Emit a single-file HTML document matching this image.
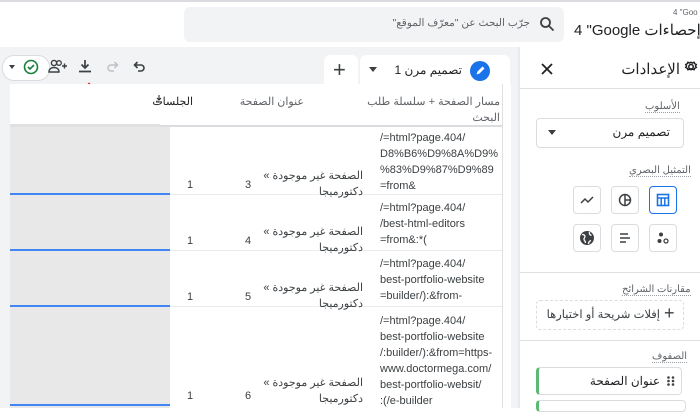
<!DOCTYPE html>
<html><head><meta charset="utf-8"><style>
body{margin:0;width:700px;height:408px;overflow:hidden;background:#fff;font-family:"Liberation Sans","Noto Sans CJK SC",sans-serif;position:relative;color:#202124}
.a{position:absolute}
.r{direction:rtl}
.cell{position:absolute;font-size:11px;line-height:16px;color:#3c4043;white-space:nowrap}
.btn{position:absolute;width:28px;height:28px;border:1px solid #dadce0;border-radius:4px;background:#fff;box-sizing:border-box}
.lbl{position:absolute;font-size:10px;color:#5f6368;border-bottom:1px dotted #9aa0a6;direction:rtl;white-space:nowrap}
</style></head><body>
<div class="a" style="left:0;top:0;width:700px;height:2px;background:#dadce0"></div>
<div class="a" style="left:184px;top:7px;width:380px;height:35px;background:#f1f3f4;border-radius:6px"></div>
<svg class="a" style="left:539px;top:16px" width="16" height="16" viewBox="0 0 16 16"><circle cx="6.5" cy="6.5" r="4.5" fill="none" stroke="#3c4043" stroke-width="1.8"/><path d="M10 10l4.5 4.5" stroke="#3c4043" stroke-width="1.8"/></svg>
<div class="a r" style="left:380px;top:17px;width:150px;font-size:10.5px;color:#5f6368;text-align:right;white-space:nowrap">جرّب البحث عن "معرّف الموقع"</div>
<div class="a" style="left:673px;top:8px;width:27px;overflow:hidden;font-size:8px;color:#5f6368;white-space:nowrap">4 "Goo</div>
<div class="a" style="left:574px;top:21px;font-size:15px;color:#202124;white-space:nowrap">4 "Google <span dir="rtl">إحصاءات</span></div>
<div class="a" style="left:0;top:47px;width:520px;height:361px;background:#f1f3f4"></div>
<div class="a" style="left:518px;top:47px;width:2px;height:361px;background:#e8eaed"></div>
<!-- right panel -->
<div class="a" style="left:520px;top:88px;width:180px;height:1px;background:#e0e0e0"></div>
<svg class="a" style="left:682px;top:60px" width="18" height="18" viewBox="0 0 24 24"><path d="M12 3l2 1 2-1 1 2 2 1-1 2 1 2-2 1-1 2-2-1-2 1-2-1-2 1-1-2-2-1 1-2-1-2 2-1 1-2 2 1z" fill="none" stroke="#202124" stroke-width="2"/><circle cx="12" cy="9" r="3" fill="none" stroke="#202124" stroke-width="2"/></svg>
<div class="a r" style="left:580px;top:60px;width:100px;font-size:15px;text-align:right">الإعدادات</div>
<svg class="a" style="left:540px;top:62px" width="14" height="14" viewBox="0 0 14 14"><path d="M2 2l10 10M12 2L2 12" stroke="#202124" stroke-width="1.8"/></svg>
<div class="lbl" style="left:645px;top:101px">الأسلوب</div>
<div class="a" style="left:536px;top:118px;width:146px;height:28px;border:1px solid #dadce0;border-radius:4px"></div>
<div class="a r" style="left:590px;top:125px;width:80px;font-size:12px;text-align:right">تصميم مرن</div>
<div class="a" style="left:548px;top:130px;width:0;height:0;border-left:4px solid transparent;border-right:4px solid transparent;border-top:5px solid #3c4043"></div>
<div class="lbl" style="left:629px;top:165px">التمثيل البصري</div>
<div class="btn" style="left:649px;top:186px;border-color:#1a73e8"></div>
<svg class="a" style="left:656px;top:193px" width="14" height="14" viewBox="0 0 14 14"><rect x="1.5" y="1.5" width="11" height="11" fill="none" stroke="#1a73e8" stroke-width="1.6"/><path d="M1.5 5h11M5.2 5v7.5M8.8 5v7.5" stroke="#1a73e8" stroke-width="1.5"/></svg>
<div class="btn" style="left:611px;top:186px"></div>
<svg class="a" style="left:618px;top:193px" width="14" height="14" viewBox="0 0 14 14"><circle cx="7" cy="7" r="5.5" fill="none" stroke="#3c4043" stroke-width="1.5"/><path d="M7 1.5v11M7 7h5.5" stroke="#3c4043" stroke-width="1.5"/></svg>
<div class="btn" style="left:573px;top:186px"></div>
<svg class="a" style="left:580px;top:193px" width="14" height="14" viewBox="0 0 14 14"><path d="M1 10l4-4 3 3 5-5" fill="none" stroke="#3c4043" stroke-width="1.5"/></svg>
<div class="btn" style="left:649px;top:224px"></div>
<svg class="a" style="left:656px;top:231px" width="14" height="14" viewBox="0 0 14 14"><circle cx="5" cy="3.5" r="2" fill="#3c4043"/><circle cx="3.5" cy="10" r="2" fill="#3c4043"/><circle cx="10" cy="10" r="2" fill="none" stroke="#3c4043" stroke-width="1.3"/></svg>
<div class="btn" style="left:611px;top:224px"></div>
<svg class="a" style="left:618px;top:231px" width="14" height="14" viewBox="0 0 14 14"><path d="M2 3h8M2 7h10M2 11h6" stroke="#3c4043" stroke-width="1.6"/></svg>
<div class="btn" style="left:573px;top:224px"></div>
<svg class="a" style="left:579px;top:230px" width="16" height="16" viewBox="0 0 16 16"><circle cx="8" cy="8" r="7" fill="#3c4043"/><path d="M3 4.5c1.5 0 3 .5 3 2s-1.5 1.5-1 3 1.5 1.5 1.5 3.5M10.5 2c-.5 2 .5 3 2 3.5M9.5 14c0-2 1-3 2.5-3.5" fill="none" stroke="#fff" stroke-width="1.3"/></svg>
<div class="a" style="left:520px;top:272px;width:180px;height:1px;background:#e0e0e0"></div>
<div class="lbl" style="left:622px;top:284px">مقارنات الشرائح</div>
<div class="a" style="left:536px;top:300px;width:146px;height:28px;border:1px dashed #dadce0;border-radius:4px"></div>
<div class="a r" style="left:540px;top:307px;width:120px;font-size:11.5px;text-align:right;color:#3c4043;white-space:nowrap">إفلات شريحة أو اختيارها</div>
<div class="a" style="left:664px;top:303px;font-size:18px;color:#3c4043">+</div>
<div class="a" style="left:520px;top:340px;width:180px;height:1px;background:#e0e0e0"></div>
<div class="lbl" style="left:652px;top:351px">الصفوف</div>
<div class="a" style="left:536px;top:367px;width:146px;height:28px;border:1px solid #dadce0;border-left:3px solid #5bb974;border-radius:4px;box-sizing:border-box"></div>
<div class="a r" style="left:580px;top:374px;width:80px;font-size:12px;text-align:right;white-space:nowrap">عنوان الصفحة</div>
<svg class="a" style="left:667px;top:376px" width="8" height="10"><g fill="#3c4043"><circle cx="1.5" cy="1.5" r="1.3"/><circle cx="6" cy="1.5" r="1.3"/><circle cx="1.5" cy="5" r="1.3"/><circle cx="6" cy="5" r="1.3"/><circle cx="1.5" cy="8.5" r="1.3"/><circle cx="6" cy="8.5" r="1.3"/></g></svg>
<div class="a" style="left:536px;top:400px;width:146px;height:10px;border:1px solid #dadce0;border-left:3px solid #5bb974;border-radius:4px"></div>
<!-- tabs -->
<div class="a" style="left:360px;top:55px;width:150px;height:32px;background:#fff;border-radius:6px 6px 0 0"></div>
<div class="a" style="left:470px;top:61px;width:20px;height:20px;border-radius:50%;background:#1a73e8"></div>
<svg class="a" style="left:474px;top:65px" width="12" height="12" viewBox="0 0 12 12"><path d="M2.5 9.5l1-3 5-5 2 2-5 5z" fill="#fff"/></svg>
<div class="a r" style="left:390px;top:63px;width:72px;font-size:12px;text-align:right;white-space:nowrap">تصميم مرن 1</div>
<div class="a" style="left:369px;top:67px;width:0;height:0;border-left:4px solid transparent;border-right:4px solid transparent;border-top:5px solid #3c4043"></div>
<div class="a" style="left:324px;top:55px;width:34px;height:32px;background:#fff;border-radius:6px 6px 0 0"></div>
<div class="a" style="left:333px;top:57px;font-size:22px;color:#3c4043">+</div>
<!-- toolbar -->
<div class="a" style="left:2px;top:55px;width:46px;height:24px;border:1px solid #dadce0;border-radius:12px;background:#fff"></div>
<div class="a" style="left:9px;top:65px;width:0;height:0;border-left:3px solid transparent;border-right:3px solid transparent;border-top:4px solid #3c4043"></div>
<svg class="a" style="left:23px;top:59px" width="16" height="16"><circle cx="8" cy="8" r="6.5" fill="none" stroke="#188038" stroke-width="1.6"/><path d="M5 8l2 2 4-4" fill="none" stroke="#188038" stroke-width="1.6"/></svg>
<svg class="a" style="left:48px;top:58px" width="20" height="16"><circle cx="6" cy="5" r="2.6" fill="none" stroke="#3c4043" stroke-width="1.4"/><path d="M1 14c0-3 2-4.5 5-4.5s5 1.5 5 4.5z" fill="none" stroke="#3c4043" stroke-width="1.4"/><circle cx="11" cy="5" r="2.3" fill="none" stroke="#3c4043" stroke-width="1.3"/><path d="M14 8h5M16.5 5.5v5" stroke="#3c4043" stroke-width="1.4"/></svg>
<svg class="a" style="left:77px;top:58px" width="16" height="16"><path d="M8 2v8M4.5 6.5L8 10l3.5-3.5M2 13.5h12" fill="none" stroke="#3c4043" stroke-width="1.7"/></svg>
<svg class="a" style="left:105px;top:58px" width="16" height="16"><path d="M12 7H6a3 3 0 000 6h3M9.5 4L12.5 7l-3 3" fill="none" stroke="#bdc1c6" stroke-width="1.5"/></svg>
<svg class="a" style="left:131px;top:58px" width="16" height="16"><path d="M4 7h6a3 3 0 010 6H7M6.5 4L3.5 7l3 3" fill="none" stroke="#3c4043" stroke-width="1.6"/></svg>
<svg class="a" style="left:76px;top:74px" width="62" height="40"><path d="M13 30V12M7 17l6-6 5 6M31 13c2 12 15 20 29 11" fill="none" stroke="#e8211d" stroke-width="3.5" stroke-linecap="round"/></svg>
<!-- table -->
<div class="a" style="left:10px;top:84px;width:500px;height:324px;background:#fff"></div>
<div class="a" style="left:10px;top:125px;width:500px;height:2px;background:#dadce0"></div>
<div class="a" style="left:10px;top:127px;width:160px;height:281px;background:#e8e8e8"></div>
<div class="a" style="left:10px;top:124px;width:150px;height:3px;background:#e0e0e0"></div>
<div class="cell r" style="left:370px;top:94px;width:130px;text-align:right;color:#5f6368;font-size:11px">مسار الصفحة + سلسلة طلب<br>البحث</div>
<div class="cell r" style="left:230px;top:94px;width:74px;text-align:right;color:#5f6368;font-size:11px">عنوان الصفحة</div>
<div class="cell r" style="left:160px;top:94px;width:33px;text-align:right;color:#202124;font-size:11px">الجلسات</div>
<svg class="a" style="left:155px;top:94px" width="8" height="9"><path d="M4 1v5M2 4l2 2 2-2M1 8h6" fill="none" stroke="#202124" stroke-width="1"/></svg>
<div class="a" style="left:10px;top:193px;width:160px;height:2px;background:#4285f4"></div>
<div class="a" style="left:170px;top:194px;width:332px;height:1px;background:#e8eaed"></div>
<div class="cell" style="left:380px;top:130px">/=html?page.404/<br>D8%B6%D9%8A%D9%<br>%83%D9%87%D9%89<br>=from&amp;</div>
<div class="cell r" style="left:255px;top:168px;width:108px;text-align:right">الصفحة غير موجودة »<br>دكتورميجا</div>
<div class="cell" style="left:245px;top:177px">3</div><div class="cell" style="left:187px;top:177px">1</div>
<div class="a" style="left:10px;top:249px;width:160px;height:2px;background:#4285f4"></div>
<div class="a" style="left:170px;top:250px;width:332px;height:1px;background:#e8eaed"></div>
<div class="cell" style="left:380px;top:200px">/=html?page.404/<br>/best-html-editors<br>=from&amp;:*(</div>
<div class="cell r" style="left:255px;top:224px;width:108px;text-align:right">الصفحة غير موجودة »<br>دكتورميجا</div>
<div class="cell" style="left:245px;top:233px">4</div><div class="cell" style="left:187px;top:233px">1</div>
<div class="a" style="left:10px;top:305px;width:160px;height:2px;background:#4285f4"></div>
<div class="a" style="left:170px;top:306px;width:332px;height:1px;background:#e8eaed"></div>
<div class="cell" style="left:380px;top:256px">/=html?page.404/<br>best-portfolio-website<br>=builder/):&amp;from-</div>
<div class="cell r" style="left:255px;top:280px;width:108px;text-align:right">الصفحة غير موجودة »<br>دكتورميجا</div>
<div class="cell" style="left:245px;top:289px">5</div><div class="cell" style="left:187px;top:289px">1</div>
<div class="cell" style="left:380px;top:313px">/=html?page.404/<br>best-portfolio-website<br>/:builder/):&amp;from=https-<br>www.doctormega.com/<br>best-portfolio-websit/<br>:(/e-builder</div>
<div class="cell r" style="left:255px;top:375px;width:108px;text-align:right">الصفحة غير موجودة »<br>دكتورميجا</div>
<div class="cell" style="left:245px;top:388px">6</div><div class="cell" style="left:187px;top:388px">1</div>
<div class="a" style="left:10px;top:404px;width:160px;height:2px;background:#4285f4"></div>
<div class="a" style="left:502px;top:84px;width:8px;height:324px;background:#fff;border-left:1px solid #e0e0e0"></div>
</body></html>
